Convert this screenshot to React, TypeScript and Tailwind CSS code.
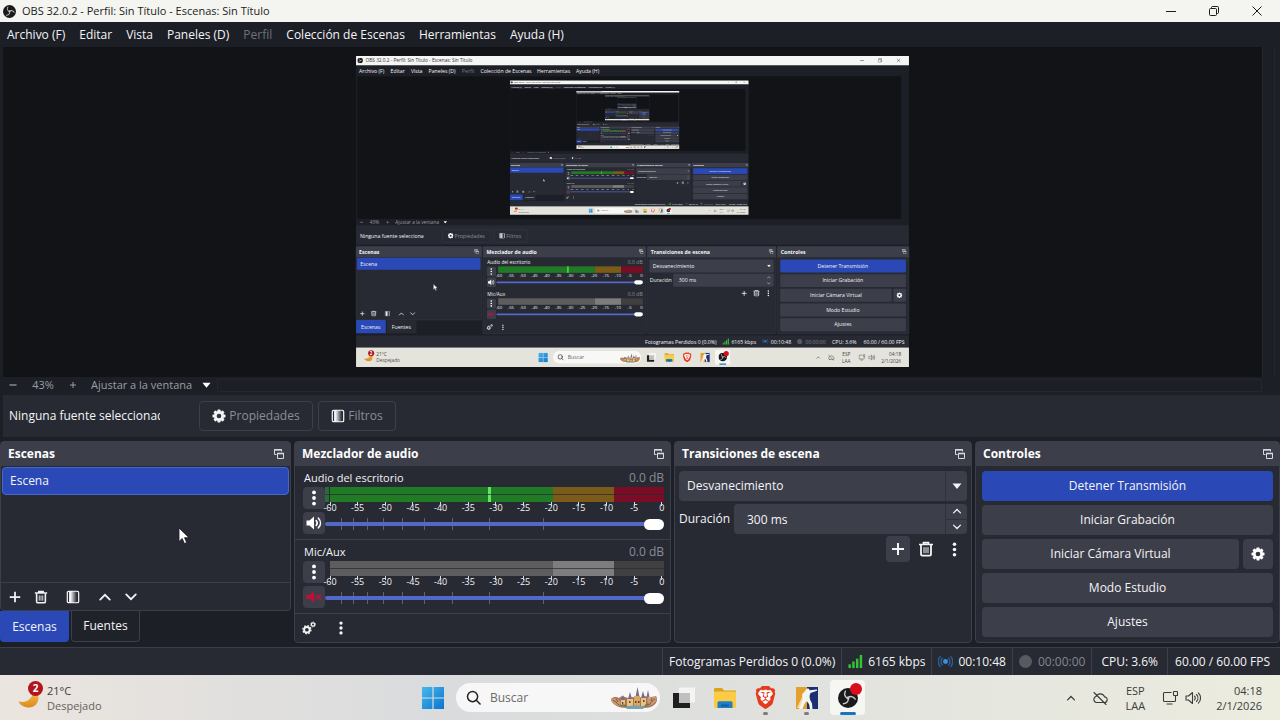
import { createContext, useContext, type ReactNode, type SVGProps } from "react"
import { SiBrave } from "react-icons/si"

type IconProps = SVGProps<SVGSVGElement>

const DB_MARKS = ["-60", "-55", "-50", "-45", "-40", "-35", "-30", "-25", "-20", "-15", "-10", "-5", "0"]
const FADER_TICKS = [16, 28, 42, 58, 77, 99, 127, 164, 218]
const MENUS = [
  { label: "Archivo (F)", x: 7 },
  { label: "Editar", x: 80 },
  { label: "Vista", x: 127 },
  { label: "Paneles (D)", x: 168 },
  { label: "Perfil", x: 245, disabled: true },
  { label: "Colección de Escenas", x: 288 },
  { label: "Herramientas", x: 419 },
  { label: "Ayuda (H)", x: 509 },
]

/* ---------- icons ---------- */

const PlusIcon = (props: IconProps) => (
  <svg viewBox="0 0 16 16" fill="none" stroke="currentColor" strokeWidth="2" {...props}>
    <path d="M8 2v12M2 8h12" />
  </svg>
)

const MinusIcon = (props: IconProps) => (
  <svg viewBox="0 0 16 16" fill="none" stroke="currentColor" strokeWidth="2.5" {...props}>
    <path d="M1 8h14" />
  </svg>
)

const TrashIcon = (props: IconProps) => (
  <svg viewBox="0 0 16 16" fill="none" stroke="currentColor" {...props}>
    <path d="M1 3.5h14M5.5 3V1.6h5V3" strokeWidth="1.7" />
    <path d="M3 4v9a1.6 1.6 0 0 0 1.6 1.6h6.8A1.6 1.6 0 0 0 13 13V4" strokeWidth="1.8" />
    <path d="M6 6.2v6M8 6.2v6M10 6.2v6" strokeWidth="1" />
  </svg>
)

const FilterIcon = (props: IconProps) => (
  <svg viewBox="0 0 16 16" {...props}>
    <defs>
      <linearGradient id="filter-fade">
        <stop offset="0.2" stopColor="#f2f2f4" />
        <stop offset="1" stopColor="#272a33" />
      </linearGradient>
    </defs>
    <rect x="1.5" y="1.5" width="13" height="13" rx="1.5" fill="none" stroke="currentColor" strokeWidth="1.4" />
    <rect x="3.5" y="2" width="9" height="12" fill="url(#filter-fade)" />
  </svg>
)

const ChevronUpIcon = (props: IconProps) => (
  <svg viewBox="0 0 16 16" fill="none" stroke="currentColor" strokeWidth="2" strokeLinecap="round" {...props}>
    <path d="M2.5 11 8 5.5l5.5 5.5" />
  </svg>
)

const ChevronDownIcon = (props: IconProps) => (
  <svg viewBox="0 0 16 16" fill="none" stroke="currentColor" strokeWidth="2" strokeLinecap="round" {...props}>
    <path d="M2.5 5 8 10.5 13.5 5" />
  </svg>
)

const CaretIcon = (props: IconProps) => (
  <svg viewBox="0 0 10 6" fill="currentColor" {...props}>
    <path d="M0.5 0.5h9L5 6z" />
  </svg>
)

const KebabIcon = (props: IconProps) => (
  <svg viewBox="0 0 16 16" fill="currentColor" {...props}>
    <circle cx="8" cy="2.4" r="1.9" />
    <circle cx="8" cy="8" r="1.9" />
    <circle cx="8" cy="13.6" r="1.9" />
  </svg>
)

const GearIcon = (props: IconProps) => (
  <svg viewBox="0 0 16 16" {...props}>
    <g fill="currentColor">
      <rect x="6.2" y="0.6" width="3.6" height="14.8" rx="0.8" />
      <rect x="6.2" y="0.6" width="3.6" height="14.8" rx="0.8" transform="rotate(45 8 8)" />
      <rect x="6.2" y="0.6" width="3.6" height="14.8" rx="0.8" transform="rotate(90 8 8)" />
      <rect x="6.2" y="0.6" width="3.6" height="14.8" rx="0.8" transform="rotate(135 8 8)" />
      <circle cx="8" cy="8" r="5.6" />
    </g>
    <circle cx="8" cy="8" r="2.7" fill="#33353f" />
  </svg>
)

const GearsIcon = (props: IconProps) => (
  <svg viewBox="0 0 16 16" {...props}>
    <circle cx="5.6" cy="10" r="3.2" fill="none" stroke="currentColor" strokeWidth="2.2" />
    <circle cx="5.6" cy="10" r="4.6" fill="none" stroke="currentColor" strokeWidth="1.6" strokeDasharray="1.8 1.8" />
    <circle cx="12.6" cy="4" r="1.9" fill="none" stroke="currentColor" strokeWidth="1.5" />
    <circle cx="12.6" cy="4" r="2.8" fill="none" stroke="currentColor" strokeWidth="1" strokeDasharray="1.1 1.1" />
  </svg>
)

const SpeakerIcon = (props: IconProps) => (
  <svg viewBox="0 0 16 16" fill="none" stroke="currentColor" strokeWidth="1.6" strokeLinecap="round" {...props}>
    <path d="M0.5 5.5h3L8 1.6v12.8L3.5 10.5h-3z" fill="currentColor" stroke="none" />
    <path d="M10.2 5.6c1.2 1.4 1.2 3.4 0 4.8M12.4 3.2c2.7 2.8 2.7 6.8 0 9.6" />
  </svg>
)

const VolumeIcon = (props: IconProps) => (
  <svg viewBox="0 0 16 16" fill="none" stroke="currentColor" strokeWidth="1.1" strokeLinecap="round" {...props}>
    <path d="M1 6h2.500L7.500 2.500v11L3.500 10H1z" strokeLinejoin="round" />
    <path d="M9.500 6.200c.9 1 .9 2.600 0 3.600M11.500 4.500c1.900 2 1.900 5 0 7M13.400 2.800c2.800 3 2.800 7.400 0 10.400" />
  </svg>
)

const MutedIcon = (props: IconProps) => (
  <svg viewBox="0 0 16 16" fill="none" stroke="currentColor" strokeWidth="1.7" strokeLinecap="round" {...props}>
    <path d="M0.5 6h3L8 2.8v10.4L3.5 10h-3z" fill="currentColor" stroke="none" />
    <path d="m10 6.200 4.500 3.800M14.500 6.200 10 10" />
  </svg>
)

const PopoutIcon = (props: IconProps) => (
  <svg viewBox="0 0 12 12" fill="none" stroke="currentColor" {...props}>
    <path d="M3.500 6.500h-2v-5h7v2" />
    <path d="M1 2h8" strokeWidth="1.4" />
    <path d="M4.500 5.500h6v5h-6z" />
    <path d="M4 5.500h7" strokeWidth="1.6" />
  </svg>
)

const SignalIcon = (props: IconProps) => (
  <svg viewBox="0 0 16 16" fill="#35c435" {...props}>
    <rect x="0.5" y="11" width="2.6" height="4" />
    <rect x="4.5" y="8" width="2.6" height="7" />
    <rect x="8.5" y="5" width="2.6" height="10" />
    <rect x="12.5" y="1" width="2.6" height="14" />
  </svg>
)

const StreamIcon = (props: IconProps) => (
  <svg viewBox="0 0 16 16" fill="none" stroke="#2a5f99" strokeWidth="1.5" strokeLinecap="round" {...props}>
    <circle cx="8" cy="8" r="2.6" fill="#3d8fe0" stroke="none" />
    <path d="M4.6 4.6a4.8 4.8 0 0 0 0 6.8M11.4 4.6a4.8 4.8 0 0 1 0 6.8M2.4 2.8a7.4 7.4 0 0 0 0 10.4M13.6 2.8a7.4 7.4 0 0 1 0 10.4" />
  </svg>
)

const CursorIcon = (props: IconProps) => (
  <svg viewBox="0 0 12 18" {...props}>
    <path d="M1 1v13.5l3.2-3 2.2 5 2.3-1-2.2-4.8H11z" fill="#fff" stroke="#1b1c20" strokeWidth="0.8" />
  </svg>
)

const WindowsIcon = (props: IconProps) => (
  <svg viewBox="0 0 22 22" {...props}>
    <defs>
      <linearGradient id="win-blue" x1="0" y1="0" x2="1" y2="1">
        <stop offset="0" stopColor="#46b9ea" />
        <stop offset="1" stopColor="#0b74cf" />
      </linearGradient>
    </defs>
    <path d="M0 0h10.4v10.4H0zM11.6 0H22v10.4H11.6zM0 11.6h10.4V22H0zM11.6 11.6H22V22H11.6z" fill="url(#win-blue)" />
  </svg>
)

const SearchIcon = (props: IconProps) => (
  <svg viewBox="0 0 16 16" fill="none" stroke="currentColor" strokeWidth="1.6" strokeLinecap="round" {...props}>
    <circle cx="7" cy="7" r="5.4" />
    <path d="m11 11 4 4" />
  </svg>
)

const CastleArt = (props: IconProps) => (
  <svg viewBox="0 0 48 22" {...props}>
    <path d="M1 12c3-3 6-2 8-1l3-2 6 2 5-1 6 1 6-2 5 2 6-2c2 3 1 7-2 9-3 3-9 3-13 3H17C9 21 2 18 1 12z" fill="#a8755a" />
    <path d="M1 12c4-2 8 0 10 4l-2 3c-4-1-8-3-8-7zM37 12c3-3 7-3 10-2 0 5-4 8-9 9z" fill="#c99a72" />
    <path d="M3 13c2 1 4 3 6 5M45 12c-2 1-4 3-6 6M6 12l2 3M42 11l-1 3" fill="none" stroke="#7a4d3c" strokeWidth="0.9" />
    <path d="M17 12h6v7h-6zM31 11h5v8h-5zM11 13h4v6h-4z" fill="#e7c37e" />
    <path d="M24 9h6v11h-6z" fill="#d9a765" />
    <path d="m27.500 0 1.800 9h-3.600zM33 4l2 7h-4zM20 5l2 7h-4zM38 3l1.500 7h-3zM13 8l2 5h-4z" fill="#7d6a8c" />
    <path d="M25 14h1.500v2H25zM28 14h1.500v2H28zM19 14h1.500v2H19zM33 13h1.500v2H33zM12 15h1.300v2H12z" fill="#6b4433" />
    <path d="M15 20c6-2 14-2 20 0l-2 2H17z" fill="#7aa0b4" />
    <path d="M11 19c2-2 4-1 5 1M35 19c1-2 3-2 4-1" fill="none" stroke="#5f7d4c" strokeWidth="1.500" />
  </svg>
)

const TaskViewIcon = (props: IconProps) => (
  <svg viewBox="0 0 22 22" {...props}>
    <rect x="6" y="0.500" width="16" height="15" fill="#f4f4f2" />
    <path d="M0 6h6v10h11v5H0z" fill="#1e1f1f" />
    <rect x="6" y="6" width="11" height="10" fill="#bfc0bf" />
  </svg>
)

const FolderIcon = (props: IconProps) => (
  <svg viewBox="0 0 22 22" {...props}>
    <path d="M0 2.500C0 1.500.6 1 1.500 1H8l2 2.500H22V9H0z" fill="#d9a21f" />
    <rect x="0" y="4.500" width="22" height="16.500" rx="1" fill="#fbcb45" />
    <path d="M3.500 21v-5c0-1 .7-1.700 1.700-1.700h11.600c1 0 1.700.7 1.700 1.700v5z" fill="#1d7fc4" />
    <rect x="7" y="17.500" width="8" height="2" rx="1" fill="#125e99" />
  </svg>
)

const BraveIcon = (props: IconProps) => (
  <svg viewBox="0 0 24 24" {...props}>
    <path d="M6 5h12l1.500 7L17 18l-5 4-5-4-2.500-6z" fill="#fff" />
    <SiBrave size="24" color="#e8391c" />
  </svg>
)

const StrikeIcon = (props: IconProps) => (
  <svg viewBox="0 0 22 22" {...props}>
    <rect width="11" height="22" fill="#e3a02c" />
    <rect x="11" width="11" height="22" fill="#1d2f73" />
    <path
      d="M10.500 2c1.200-1 3-.3 3 1.200l7.500-.7v1.300L14.500 6l-1 3 .5 3.500 2 4 .5 5.500H14l-1-5-2.500-3L8 18l-1.500 4H3l2.500-6 1.500-4.500-.8-4L9 4z"
      fill="#f4f4f0"
    />
    <path d="M1 21 6 10l1-4 1 1v5L4 21z" fill="#fff" opacity="0.600" />
  </svg>
)

const ObsIcon = (props: IconProps) => (
  <svg viewBox="0 0 24 24" {...props}>
    <circle cx="12" cy="12" r="12" fill="#1a1a1d" />
    <g fill="none" stroke="#c9c9cd" strokeWidth="1.7" strokeLinecap="round">
      <path d="M12 12.500C8.500 11 7 8 8.800 3.800" />
      <path d="M12 12.500C8.500 11 7 8 8.800 3.800" transform="rotate(120 12 12)" />
      <path d="M12 12.500C8.500 11 7 8 8.800 3.800" transform="rotate(240 12 12)" />
    </g>
    <circle cx="12" cy="12" r="1.800" fill="#c9c9cd" />
  </svg>
)

const MoonIcon = (props: IconProps) => (
  <svg viewBox="0 0 22 22" {...props}>
    <defs>
      <linearGradient id="moon-gold" x1="0" y1="0" x2="0" y2="1">
        <stop offset="0" stopColor="#f9c04c" />
        <stop offset="1" stopColor="#dd8a1d" />
      </linearGradient>
    </defs>
    <path d="M16 4c2 2.500 4.500 5 4.500 8.500a9.500 9.500 0 0 1-9.500 9C6 21.500 2 19 .5 15.500 8 17.500 15 13 16 4z" fill="url(#moon-gold)" />
  </svg>
)

const MinimizeGlyph = (props: IconProps) => (
  <svg viewBox="0 0 10 10" stroke="currentColor" fill="none" {...props}>
    <path d="M0 5.500h10" />
  </svg>
)

const RestoreGlyph = (props: IconProps) => (
  <svg viewBox="0 0 10 10" stroke="currentColor" fill="none" {...props}>
    <rect x="0.500" y="2.500" width="7" height="7" rx="1" />
    <path d="M2.500 2.500v-1a1 1 0 0 1 1-1h5a1 1 0 0 1 1 1v5a1 1 0 0 1-1 1h-1" />
  </svg>
)

const CloseGlyph = (props: IconProps) => (
  <svg viewBox="0 0 10 10" stroke="currentColor" fill="none" {...props}>
    <path d="m.5.5 9 9M9.500.5l-9 9" />
  </svg>
)

const CloudOffIcon = (props: IconProps) => (
  <svg viewBox="0 0 16 16" fill="none" stroke="currentColor" strokeWidth="1.100" strokeLinecap="round" {...props}>
    <path d="M4.500 12.500h7.700a2.800 2.800 0 0 0 .4-5.600A4.700 4.700 0 0 0 4 6.500a3.100 3.100 0 0 0 .5 6z" />
    <path d="m2 2.500 12 12" />
  </svg>
)

const NetworkIcon = (props: IconProps) => (
  <svg viewBox="0 0 16 16" fill="none" stroke="currentColor" strokeWidth="1.100" {...props}>
    <path d="M9.500 2.500h-7a1 1 0 0 0-1 1v7a1 1 0 0 0 1 1h10a1 1 0 0 0 1-1V8M4.500 14h6" />
    <rect x="11.500" y="1.500" width="4" height="4" rx="0.500" />
    <path d="M13.500 5.500V8" />
  </svg>
)

/* ---------- captured display shown in the preview ---------- */

// Past the second level the text is under two pixels high, so it becomes a dash.
const TinyText = createContext(false)

type LabelProps = { x: number; y: number; size?: number; fill?: string; bold?: boolean; mid?: boolean; children: string }

function T({ x, y, size = 12, fill = "#f4f4f6", bold, mid, children }: LabelProps) {
  const tiny = useContext(TinyText)
  if (tiny) {
    const width = children.length * size * 0.5
    return <rect x={mid ? x - width / 2 : x} y={y - size * 0.65} width={width} height={size * 0.5} fill={fill} opacity="0.6" />
  }
  return (
    <text x={x} y={y} fontSize={size} fill={fill} fontWeight={bold ? 700 : 400} textAnchor={mid ? "middle" : "start"}>
      {children}
    </text>
  )
}

function CapturedStrip({ y, muted }: { y: number; muted?: boolean }) {
  return (
    <g>
      <T x={304} y={y + 14} size={11}>{muted ? "Mic/Aux" : "Audio del escritorio"}</T>
      <T x={629} y={y + 14} fill="#8b8d96">0.0 dB</T>
      <rect x="303" y={y + 21} width="21" height="22" rx="3" fill="#3c3e4a" />
      <rect x="303" y={y + 46} width="21" height="22" rx="3" fill="#3c3e4a" />
      <KebabIcon x="305" y={y + 24} width="16" height="16" color="#fff" />
      {muted ? (
        <MutedIcon x="305" y={y + 49} width="16" height="16" color="#c01036" />
      ) : (
        <SpeakerIcon x="305" y={y + 49} width="16" height="16" color="#fff" />
      )}
      <rect x="329" y={y + 20} width="224" height="15" fill={muted ? "#5d5d5d" : "#217a25"} />
      <rect x="553" y={y + 20} width="61" height="15" fill={muted ? "#7d7d7d" : "#7a5c18"} />
      <rect x="614" y={y + 20} width="50" height="15" fill={muted ? "#404040" : "#7a0c26"} />
      {!muted && <rect x="489" y={y + 20} width="3" height="15" fill="#5fe85f" />}
      {DB_MARKS.map((mark, i) => (
        <T key={mark} x={331 + i * 27.5} y={y + 44} size={10} mid>{mark}</T>
      ))}
      <rect x="325" y={y + 55} width="325" height="4" rx="2" fill="#5468c8" />
      <rect x="644" y={y + 52} width="20" height="10" rx="5" fill="#fff" />
    </g>
  )
}

function CapturedDisplay({ depth }: { depth: number }) {
  return (
    <g fontFamily="Open Sans, Noto Sans, sans-serif">
      <rect width="1280" height="720" fill="#272a33" />
      <rect width="1280" height="22" fill="#f5f5f3" />
      <ObsIcon x="3" y="4" width="13" height="13" />
      <T x={22} y={15} size={11} fill="#333">OBS 32.0.2 - Perfil: Sin Título - Escenas: Sin Título</T>
      <MinimizeGlyph x="1166" y="5" width="10" height="10" color="#222" />
      <RestoreGlyph x="1208" y="5" width="10" height="10" color="#222" />
      <CloseGlyph x="1251" y="5" width="10" height="10" color="#222" />
      <rect y="22" width="1280" height="370" fill="#1d1f26" />
      {MENUS.map((m) => (
        <T key={m.label} x={m.x} y={39} fill={m.disabled ? "#777a82" : "#f4f4f6"}>{m.label}</T>
      ))}
      <rect x="3" y="47" width="1259" height="330" fill="#121317" />
      {depth > 0 && (
        <TinyText.Provider value={depth < 4}>
          <svg x="356" y="56" width="553" height="312" viewBox="0 0 1280 720">
            <CapturedDisplay depth={depth - 1} />
          </svg>
        </TinyText.Provider>
      )}
      <T x={32} y={389} size={11} fill="#9b9da5">43%</T>
      <T x={91} y={389} size={11} fill="#9b9da5">Ajustar a la ventana</T>
      <MinusIcon x="9" y="381" width="8" height="8" color="#9b9da5" />
      <PlusIcon x="69" y="381" width="8" height="8" color="#9b9da5" />
      <CaretIcon x="202" y="382" width="9" height="6" color="#fff" />
      <T x={9} y={421}>Ninguna fuente selecciona</T>
      <rect x="200" y="402" width="112" height="29" rx="3" fill="none" stroke="#3c3e4a" />
      <rect x="319" y="402" width="77" height="29" rx="3" fill="none" stroke="#3c3e4a" />
      <GearIcon x="212" y="409" width="14" height="14" color="#fff" />
      <T x={228} y={421} fill="#8b8d96">Propiedades</T>
      <FilterIcon x="331" y="409" width="14" height="14" color="#fff" />
      <T x={348} y={421} fill="#8b8d96">Filtros</T>

      <rect y="437" width="1280" height="210" fill="#1d1f26" />
      <rect x="0" y="441" width="291" height="170" rx="3" fill="#272a33" stroke="#3c3e4a" />
      <rect x="294" y="441" width="377" height="202" rx="3" fill="#272a33" stroke="#3c3e4a" />
      <rect x="674" y="441" width="298" height="202" rx="3" fill="#272a33" stroke="#3c3e4a" />
      <rect x="975" y="441" width="305" height="202" rx="3" fill="#272a33" stroke="#3c3e4a" />
      <path d="M0 441h291v25H0zM294 441h377v25H294zM674 441h298v25H674zM975 441h305v25H975z" fill="#3c3e4a" />
      <T x={7} y={458} bold>Escenas</T>
      <T x={302} y={458} bold>Mezclador de audio</T>
      <T x={682} y={458} bold>Transiciones de escena</T>
      <T x={983} y={458} bold>Controles</T>
      {[279, 660, 961, 1269].map((x) => (
        <PopoutIcon key={x} x={x - 6} y="447" width="12" height="12" color="#d8d9de" />
      ))}
      <rect x="2" y="467" width="286" height="28" rx="3" fill="#2a49b6" />
      <T x={10} y={486}>Escena</T>
      <CursorIcon x="178" y="527" width="12" height="18" />
      <g color="#f4f4f6">
        <PlusIcon x="8" y="590" width="13" height="13" />
        <TrashIcon x="34" y="589" width="14" height="14" />
        <FilterIcon x="66" y="590" width="13" height="13" />
        <ChevronUpIcon x="98" y="590" width="14" height="14" />
        <ChevronDownIcon x="124" y="590" width="14" height="14" />
        <GearsIcon x="302" y="620" width="15" height="15" />
        <KebabIcon x="333" y="621" width="14" height="14" />
      </g>
      <rect x="0" y="611" width="69" height="31" rx="2" fill="#2a49b6" />
      <rect x="71" y="611" width="69" height="31" rx="2" fill="#272a33" />
      <T x={34} y={631} mid>Escenas</T>
      <T x={105} y={631} mid>Fuentes</T>

      <CapturedStrip y={467} />
      <CapturedStrip y={541} muted />

      <rect x="679" y="471" width="288" height="30" rx="3" fill="#3c3e4a" />
      <rect x="734" y="504" width="233" height="30" rx="3" fill="#3c3e4a" />
      <T x={687} y={490}>Desvanecimiento</T>
      <T x={680} y={524}>Duración</T>
      <T x={747} y={524}>300 ms</T>
      <g color="#f4f4f6">
        <CaretIcon x="951" y="483" width="10" height="6" />
        <ChevronUpIcon x="951" y="508" width="9" height="9" />
        <ChevronDownIcon x="951" y="522" width="9" height="9" />
        <PlusIcon x="891" y="542" width="15" height="15" />
        <TrashIcon x="919" y="541" width="16" height="16" />
        <KebabIcon x="947" y="542" width="15" height="15" />
      </g>
      {["Detener Transmisión", "Iniciar Grabación", "Iniciar Cámara Virtual", "Modo Estudio", "Ajustes"].map((label, i) => (
        <g key={label}>
          <rect x="982" y={471 + i * 34} width={i === 2 ? 258 : 291} height="30" rx="3" fill={i ? "#3c3e4a" : "#2a49b6"} />
          <T x={i === 2 ? 1111 : 1127} y={490 + i * 34} mid>{label}</T>
        </g>
      ))}
      <rect x="1244" y="539" width="29" height="30" rx="3" fill="#3c3e4a" />
      <GearIcon x="1251" y="547" width="14" height="14" color="#fff" />

      <T x={669} y={666}>Fotogramas Perdidos 0 (0.0%)</T>
      <SignalIcon x="848" y="653" width="16" height="16" />
      <T x={869} y={666}>6165 kbps</T>
      <StreamIcon x="940" y="653" width="15" height="15" />
      <T x={960} y={666}>00:10:48</T>
      <circle cx="1027" cy="661" r="6" fill="#585a62" />
      <T x={1040} y={666} fill="#83858d">00:00:00</T>
      <T x={1102} y={666}>CPU: 3.6%</T>
      <T x={1175} y={666}>60.00 / 60.00 FPS</T>

      <rect y="675" width="1280" height="45" fill="#e4e3dc" />
      <MoonIcon x="18" y="685" width="22" height="22" />
      <circle cx="35" cy="688" r="7" fill="#b3141d" />
      <T x={32} y={692} size={10} fill="#fff" bold>2</T>
      <T x={47} y={694} size={11} fill="#444">21°C</T>
      <T x={47} y={709} size={11} fill="#555">Despejado</T>
      <WindowsIcon x="422" y="687" width="22" height="22" />
      <rect x="456" y="683" width="204" height="29" rx="14" fill="#f8f8f7" />
      <SearchIcon x="466" y="690" width="15" height="15" color="#222" />
      <T x={490} y={702} fill="#666">Buscar</T>
      <CastleArt x="610" y="688" width="48" height="22" />
      <TaskViewIcon x="673" y="687" width="22" height="22" />
      <FolderIcon x="714" y="687" width="22" height="22" />
      <BraveIcon x="755" y="686" width="23" height="23" />
      <StrikeIcon x="797" y="687" width="22" height="22" />
      <rect x="831" y="680" width="35" height="35" rx="4" fill="#f6f6f2" />
      <ObsIcon x="839" y="687" width="20" height="20" />
      <circle cx="857" cy="689" r="6" fill="#d90d1c" />
      <rect x="841" y="712" width="16" height="3" rx="1" fill="#1a73c4" />
      <ChevronUpIcon x="1065" y="693" width="10" height="10" color="#444" />
      <CloudOffIcon x="1092" y="690" width="16" height="16" color="#444" />
      <NetworkIcon x="1163" y="690" width="16" height="16" color="#444" />
      <VolumeIcon x="1186" y="690" width="16" height="16" color="#444" />
      <T x={1135} y={695} size={11} fill="#444" mid>ESP</T>
      <T x={1135} y={710} size={11} fill="#444" mid>LAA</T>
      <T x={1234} y={695} size={11} fill="#444">04:18</T>
      <T x={1216} y={710} size={11} fill="#444">2/1/2026</T>
    </g>
  )
}

/* ---------- window parts ---------- */

function TitleBar() {
  return (
    <header className="flex h-[22px] shrink-0 items-center bg-[#f4f4f1] pl-[3px] pr-0.5 text-[#1c1c1c]">
      <ObsIcon className="size-[13px]" />
      <h1 className="ml-1.5 text-[11px] leading-4">OBS 32.0.2 - Perfil: Sin Título - Escenas: Sin Título</h1>
      <div className="ml-auto flex">
        <button type="button" aria-label="Minimizar" className="flex h-5 w-[43px] items-center justify-center">
          <MinimizeGlyph className="size-2.5" />
        </button>
        <button type="button" aria-label="Restaurar" className="flex h-5 w-[43px] items-center justify-center">
          <RestoreGlyph className="size-2.5" />
        </button>
        <button type="button" aria-label="Cerrar" className="flex h-5 w-[43px] items-center justify-center">
          <CloseGlyph className="size-2.5" />
        </button>
      </div>
    </header>
  )
}

function MenuBar() {
  return (
    <nav className="flex h-[25px] shrink-0 items-center gap-[14px] px-[7px] text-[12px] leading-4">
      {MENUS.map((m) => (
        <button key={m.label} type="button" disabled={m.disabled} className="text-[#f4f4f6] disabled:text-[#70727a]">
          {m.label}
        </button>
      ))}
    </nav>
  )
}

function Preview() {
  return (
    <section className="flex min-h-0 flex-1 flex-col pl-[3px]">
      <div className="flex min-h-0 flex-1">
        <div className="flex min-h-0 min-w-0 flex-1 bg-[#121317] pb-2.5 pt-[9px]">
          <svg viewBox="0 0 1280 720" className="min-h-0 min-w-0 flex-1" role="img" aria-label="Vista previa">
            <CapturedDisplay depth={4} />
          </svg>
        </div>
        <div className="w-[13px] border-x border-[#25272f]" />
        <div className="w-[5px]" />
      </div>
      <div className="flex h-[16px] items-center text-[11px] leading-4 text-[#9b9da5]">
        <button type="button" aria-label="Alejar" className="ml-1 flex w-3 justify-center">
          <MinusIcon className="size-2" />
        </button>
        <span className="w-12 text-center">43%</span>
        <button type="button" aria-label="Acercar" className="flex w-3 justify-center">
          <PlusIcon className="size-2" />
        </button>
        <button type="button" className="ml-3 flex items-center gap-2.5 pr-1.5">
          Ajustar a la ventana
          <CaretIcon className="h-1.5 w-[9px] text-white" />
        </button>
        <div className="mr-[18px] h-[13px] flex-1 border border-[#25272f]" />
      </div>
    </section>
  )
}

function SourceBar() {
  return (
    <section className="ml-[3px] mt-0.5 flex h-[42px] shrink-0 items-center bg-[#272a33] pl-1.5 text-[12px] leading-[18px]">
      <div className="w-[151px] overflow-hidden whitespace-nowrap">Ninguna fuente seleccionada</div>
      <button
        type="button"
        className="ml-[39px] flex h-[30px] w-[114px] items-center justify-center gap-[3px] rounded border border-[#3c3e4a] text-[#8b8d96]"
      >
        <GearIcon className="size-[14px] text-[#f4f4f6]" />
        Propiedades
      </button>
      <button
        type="button"
        className="ml-[5px] flex h-[30px] w-[78px] items-center justify-center gap-[3px] rounded border border-[#3c3e4a] text-[#8b8d96]"
      >
        <FilterIcon className="size-[14px] text-[#f4f4f6]" />
        Filtros
      </button>
    </section>
  )
}

function Dock({ title, children }: { title: string; children: ReactNode }) {
  return (
    <section className="flex min-w-0 flex-1 flex-col rounded border border-[#3c3e4a] bg-[#272a33]">
      <div className="flex h-6 shrink-0 items-center justify-between bg-[#3c3e4a] pl-[7px] pr-[5px]">
        <h2 className="text-[12px] font-bold leading-4 text-white">{title}</h2>
        <button type="button" aria-label={`Desacoplar ${title}`} className="text-[#d8d9de]">
          <PopoutIcon className="size-3" />
        </button>
      </div>
      {children}
    </section>
  )
}

function IconButton({ label, className = "", children }: { label: string; className?: string; children: ReactNode }) {
  return (
    <button type="button" aria-label={label} className={`flex shrink-0 items-center justify-center rounded ${className}`}>
      {children}
    </button>
  )
}

function ScenesDock() {
  return (
    <div className="flex min-w-0 flex-col">
      <Dock title="Escenas">
        <div className="relative flex-1 px-px pt-px">
          <button
            type="button"
            className="h-7 w-full rounded border border-[#4468d0] bg-[#2a49b6] pl-[7px] text-left text-[12px] leading-4"
          >
            Escena
          </button>
          <CursorIcon className="absolute left-[177px] top-[61px] h-[18px] w-3" />
        </div>
        <div className="flex h-7 shrink-0 items-center border-t border-[#3c3e4a] pl-[5px]">
          <IconButton label="Agregar escena" className="w-[18px]">
            <PlusIcon className="size-[14px]" />
          </IconButton>
          <IconButton label="Eliminar escena" className="ml-2 w-[18px]">
            <TrashIcon className="size-[14px]" />
          </IconButton>
          <IconButton label="Filtros de escena" className="ml-[14px] w-[18px]">
            <FilterIcon className="size-[14px]" />
          </IconButton>
          <IconButton label="Subir" className="ml-[14px] w-[18px]">
            <ChevronUpIcon className="size-[14px]" />
          </IconButton>
          <IconButton label="Bajar" className="ml-2 w-[18px]">
            <ChevronDownIcon className="size-[14px]" />
          </IconButton>
        </div>
      </Dock>
      <div className="flex h-8 shrink-0 gap-0.5 text-[12px] leading-4">
        <button type="button" className="h-[31px] w-[69px] rounded-b bg-[#2a49b6]">
          Escenas
        </button>
        <button type="button" className="h-[31px] w-[69px] rounded-b border border-t-0 border-[#3c3e4a] bg-[#20222a]">
          Fuentes
        </button>
      </div>
    </div>
  )
}

function MixerStrip({ name, muted = false }: { name: string; muted?: boolean }) {
  const id = muted ? "vol-mic" : "vol-desktop"
  return (
    <div className="h-[74px] border-b border-[#3c3e4a] pl-2 pr-1.5 pt-[3px]">
      <div className="flex justify-between pl-px text-[12px] leading-[18px]">
        <label htmlFor={id} className="text-[11px]">{name}</label>
        <span className="text-[#8b8d96]">0.0 dB</span>
      </div>
      <div className="flex">
        <div className="flex w-[22px] shrink-0 flex-col gap-[3px]">
          <IconButton label={`Opciones de ${name}`} className="h-[22px] w-[22px] bg-[#3c3e4a]">
            <KebabIcon className="size-4 text-white" />
          </IconButton>
          <IconButton label={`Silenciar ${name}`} className="h-[22px] w-[22px] bg-[#3c3e4a]">
            {muted ? <MutedIcon className="size-4 text-[#c01036]" /> : <SpeakerIcon className="size-4 text-white" />}
          </IconButton>
        </div>
        <div className="min-w-0 flex-1">
          <div className="relative flex h-[15px]">
            <div className={`mr-px w-1 ${muted ? "" : "bg-[#2a6b38]"}`} />
            <div className={`flex-[224] ${muted ? "bg-[#5d5d5d]" : "bg-[#217a25]"}`} />
            <div className={`flex-[61] ${muted ? "bg-[#7d7d7d]" : "bg-[#7a5c18]"}`} />
            <div className={`flex-[50] ${muted ? "bg-[#404040]" : "bg-[#7a0c26]"}`} />
            {!muted && <div className="absolute left-[48%] h-full w-[3px] bg-[#5fe85f]" />}
            <div className="absolute top-[7px] h-px w-full bg-[#272a33]/70" />
          </div>
          <div className="ml-[5px] mr-0.5 flex h-[11px] justify-between text-[9px] leading-[11px]">
            {DB_MARKS.map((mark) => (
              <span key={mark} className="relative flex w-0 justify-center">
                <span className="absolute top-0 h-1 w-px bg-[#d8d9de]" />
                {mark}
              </span>
            ))}
          </div>
          <div className="relative mt-[5px] flex h-3 items-center">
            <svg viewBox="0 0 339 12" preserveAspectRatio="none" className="absolute inset-0 h-full w-full">
              {FADER_TICKS.map((x) => (
                <rect key={x} x={x} width="1" height="12" fill="#60636e" />
              ))}
            </svg>
            <input
              id={id}
              type="range"
              defaultValue={100}
              className="relative h-1 w-full appearance-none rounded bg-[#5468c8] [&::-webkit-slider-thumb]:h-[11px] [&::-webkit-slider-thumb]:w-5 [&::-webkit-slider-thumb]:appearance-none [&::-webkit-slider-thumb]:rounded-full [&::-webkit-slider-thumb]:bg-white"
            />
          </div>
        </div>
      </div>
    </div>
  )
}

function MixerDock() {
  return (
    <Dock title="Mezclador de audio">
      <MixerStrip name="Audio del escritorio" />
      <MixerStrip name="Mic/Aux" muted />
      <div className="flex flex-1 items-center pl-1.5">
        <IconButton label="Propiedades avanzadas de audio" className="w-4">
          <GearsIcon className="size-[14px]" />
        </IconButton>
        <IconButton label="Menú del mezclador" className="ml-4 w-4">
          <KebabIcon className="size-[14px]" />
        </IconButton>
      </div>
    </Dock>
  )
}

function TransitionsDock() {
  return (
    <Dock title="Transiciones de escena">
      <div className="flex flex-col px-1 pt-[5px] text-[12px] leading-4">
        <div className="relative">
          <select aria-label="Transición" className="h-[30px] w-full appearance-none rounded bg-[#3c3e4a] pl-2">
            <option>Desvanecimiento</option>
          </select>
          <div className="pointer-events-none absolute right-0 top-0 flex h-[30px] w-[22px] items-center justify-center border-l border-[#2f323c]">
            <CaretIcon className="h-1.5 w-2.5" />
          </div>
        </div>
        <div className="mt-[3px] flex h-[30px] items-center">
          <label htmlFor="duration" className="w-[55px] shrink-0">
            Duración
          </label>
          <input id="duration" defaultValue="300 ms" className="h-[30px] min-w-0 flex-1 rounded-l bg-[#3c3e4a] pl-[13px]" />
          <div className="flex h-[30px] w-[22px] flex-col divide-y divide-[#2f323c] rounded-r border-l border-[#2f323c] bg-[#3c3e4a]">
            <button type="button" aria-label="Aumentar" className="flex flex-1 items-center justify-center">
              <ChevronUpIcon className="size-2.5" />
            </button>
            <button type="button" aria-label="Disminuir" className="flex flex-1 items-center justify-center">
              <ChevronDownIcon className="size-2.5" />
            </button>
          </div>
        </div>
        <div className="mt-0.5 flex justify-end gap-1 pr-px">
          <IconButton label="Agregar transición" className="h-[26px] w-6 bg-[#3c3e4a]">
            <PlusIcon className="size-4" />
          </IconButton>
          <IconButton label="Eliminar transición" className="h-[26px] w-6">
            <TrashIcon className="size-4" />
          </IconButton>
          <IconButton label="Propiedades de transición" className="h-[26px] w-6">
            <KebabIcon className="size-[15px]" />
          </IconButton>
        </div>
      </div>
    </Dock>
  )
}

function ControlsDock() {
  return (
    <Dock title="Controles">
      <div className="flex flex-col gap-1 px-1.5 pt-[5px] text-[12px] leading-4">
        <button type="button" className="h-[30px] rounded bg-[#2a49b6]">Detener Transmisión</button>
        <button type="button" className="h-[30px] rounded bg-[#3c3e4a]">Iniciar Grabación</button>
        <div className="flex gap-1">
          <button type="button" className="h-[30px] flex-1 rounded bg-[#3c3e4a]">Iniciar Cámara Virtual</button>
          <IconButton label="Configurar cámara virtual" className="h-[30px] w-[30px] bg-[#3c3e4a]">
            <GearIcon className="size-[14px] text-white" />
          </IconButton>
        </div>
        <button type="button" className="h-[30px] rounded bg-[#3c3e4a]">Modo Estudio</button>
        <button type="button" className="h-[30px] rounded bg-[#3c3e4a]">Ajustes</button>
      </div>
    </Dock>
  )
}

function StatusBar() {
  return (
    <footer className="mt-1 flex h-7 shrink-0 justify-end divide-x divide-[#3c3e4a] border-t border-[#3c3e4a] bg-[#272a33] text-[12px] leading-4">
      <div />
      <div className="flex items-center px-1.5">Fotogramas Perdidos 0 (0.0%)</div>
      <div className="flex items-center gap-[5px] px-1.5">
        <SignalIcon className="size-[15px]" />
        6165 kbps
      </div>
      <div className="flex items-center gap-[5px] px-1.5">
        <StreamIcon className="size-[15px]" />
        00:10:48
      </div>
      <div className="flex items-center gap-1.5 px-1.5 text-[#83858d]">
        <span className="size-[13px] rounded-full bg-[#585a62]" />
        00:00:00
      </div>
      <div className="flex items-center px-[9px]">CPU: 3.6%</div>
      <div className="flex items-center pl-[7px] pr-2.5">60.00 / 60.00 FPS</div>
    </footer>
  )
}

function TaskButton({ label, running, children }: { label: string; running?: boolean; children: ReactNode }) {
  return (
    <button type="button" aria-label={label} className="relative flex h-[35px] w-[35px] items-center justify-center">
      {children}
      {running && <span className="absolute bottom-0 h-[3px] w-[5px] rounded-full bg-[#7c7c78]" />}
    </button>
  )
}

function Taskbar() {
  return (
    <footer className="grid h-[45px] shrink-0 grid-cols-[1fr_auto_1fr] items-center bg-linear-to-r from-[#ebe5df] via-[#d9dbdd] via-35% to-[#ececdf] text-[11px] leading-[15px] text-[#3c3c3c]">
      <button type="button" className="flex items-center justify-self-start pl-[18px] text-left">
        <span className="relative mr-[5px] size-6">
          <MoonIcon className="size-[22px]" />
          <span className="absolute -right-px -top-[5px] flex size-[15px] items-center justify-center rounded-full bg-[#b3141d] text-[10px] font-bold leading-3 text-white">
            2
          </span>
        </span>
        <span>
          21°C
          <span className="block text-[#66625e]">Despejado</span>
        </span>
      </button>
      <div className="flex items-center gap-1.5">
        <TaskButton label="Inicio">
          <WindowsIcon className="size-[22px]" />
        </TaskButton>
        <label className="flex h-[29px] w-[204px] items-center rounded-full bg-[#f7f7f7] pl-2.5 pr-0.5">
          <SearchIcon className="size-[15px] shrink-0 text-[#222]" />
          <input aria-label="Buscar" placeholder="Buscar" className="ml-[9px] min-w-0 flex-1 text-[12px] placeholder:text-[#6a6a6a]" />
          <CastleArt className="h-[22px] w-12 shrink-0" />
        </label>
        <TaskButton label="Vista de tareas">
          <TaskViewIcon className="size-[22px]" />
        </TaskButton>
        <TaskButton label="Explorador de archivos">
          <FolderIcon className="size-[22px]" />
        </TaskButton>
        <TaskButton label="Brave" running>
          <BraveIcon className="size-[23px]" />
        </TaskButton>
        <TaskButton label="Counter-Strike" running>
          <StrikeIcon className="size-[22px]" />
        </TaskButton>
        <button type="button" aria-label="OBS Studio" className="relative flex size-[35px] items-center justify-center rounded bg-[#f6f6f2]">
          <ObsIcon className="size-5" />
          <span className="absolute right-[3px] top-[3px] size-3 rounded-full bg-[#d90d1c]" />
          <span className="absolute bottom-0 h-[3px] w-4 rounded-full bg-[#1a73c4]" />
        </button>
      </div>
      <div className="flex items-center justify-self-end pr-[18px]">
        <ChevronUpIcon className="size-2.5" />
        <CloudOffIcon className="ml-4 size-4" />
        <span className="ml-[18px] text-center">
          ESP
          <span className="block">LAA</span>
        </span>
        <NetworkIcon className="ml-[17px] size-4" />
        <VolumeIcon className="ml-[7px] size-4" />
        <time className="ml-[15px] text-right">
          04:18
          <span className="block">2/1/2026</span>
        </time>
      </div>
    </footer>
  )
}

export default function App() {
  return (
    <main className="flex h-screen min-h-[600px] flex-col overflow-hidden bg-[#1d1f26] font-['Open_Sans','Noto_Sans',sans-serif] text-[#f4f4f6]">
      <TitleBar />
      <MenuBar />
      <Preview />
      <SourceBar />
      <div className="mt-1 grid h-[202px] shrink-0 grid-cols-[291fr_377fr_298fr_305fr] gap-[3px]">
        <ScenesDock />
        <MixerDock />
        <TransitionsDock />
        <ControlsDock />
      </div>
      <StatusBar />
      <Taskbar />
    </main>
  )
}
